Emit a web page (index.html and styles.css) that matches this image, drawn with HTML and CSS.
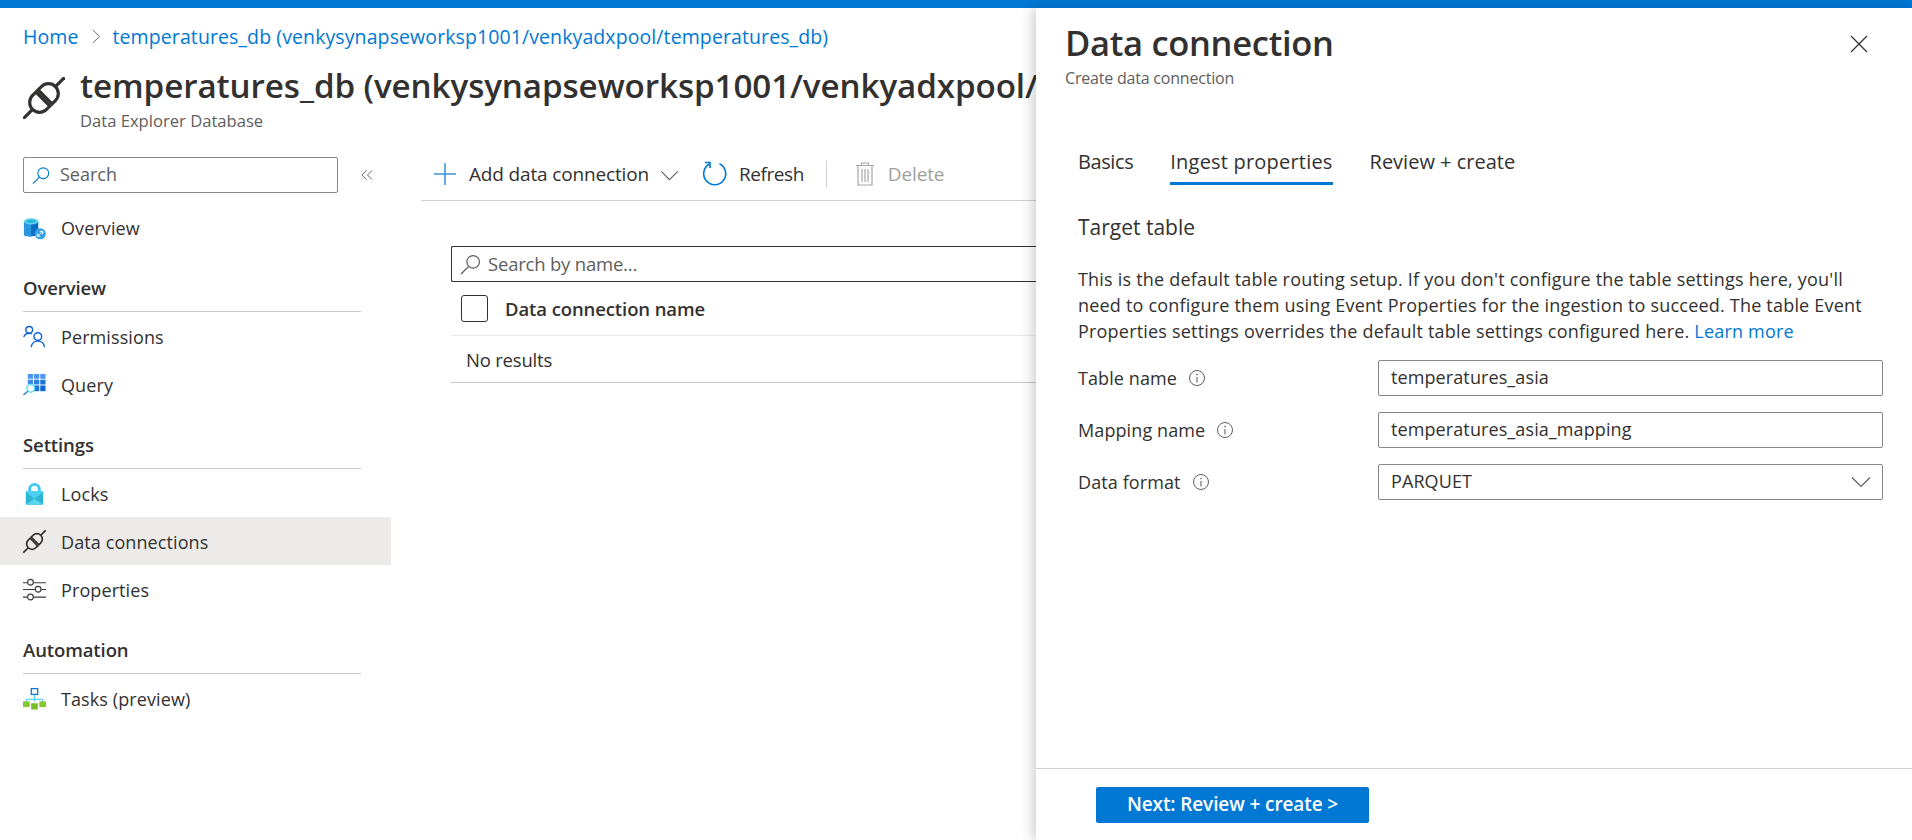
FILE: index.html
```html
<!DOCTYPE html>
<html lang="en">
<head>
<meta charset="utf-8">
<title>Data connection</title>
<link rel="stylesheet" href="styles.css">
</head>
<body>
<svg class="defs" width="0" height="0" aria-hidden="true">
  <defs>
    <symbol id="plug" viewBox="2 2 20 20">
      <g transform="rotate(-45 12 12)" fill="none" stroke="currentColor" stroke-width="1.500">
        <path d="M-2 12H4.300"/>
        <path d="M11.300 7.300H9a4.700 4.700 0 0 0 0 9.400H11.300Z"/>
        <path d="M12.700 7.300H15a4.700 4.700 0 0 1 0 9.400H12.700Z"/>
        <path d="M19.700 12H26"/>
      </g>
    </symbol>
    <symbol id="lens" viewBox="0 0 20 20">
      <circle cx="12.500" cy="7.500" r="6" fill="none" stroke="currentColor" stroke-width="1.200"/>
      <path d="M8.200 11.800L1 19" fill="none" stroke="currentColor" stroke-width="1.300"/>
    </symbol>
    <symbol id="chev" viewBox="0 0 20 12">
      <path d="M1 1.500L10 10.500L19 1.500" fill="none" stroke="currentColor" stroke-width="1.200"/>
    </symbol>
    <symbol id="info" viewBox="0 0 18 18">
      <circle cx="9" cy="9" r="7.500" fill="none" stroke="currentColor" stroke-width="1"/>
      <path d="M9 8v5.500" stroke="currentColor" stroke-width="1.100"/>
      <circle cx="9" cy="5.600" r=".8" fill="currentColor"/>
    </symbol>
  </defs>
</svg>

<div class="topbar"></div>

<div class="page">
  <nav class="crumbs">
    <a class="link">Home</a>
    <svg class="crumb-sep" viewBox="0 0 10 16"><path d="M1 1l7.500 7L1 15" fill="none" stroke="#605e5c" stroke-width="1"/></svg>
    <a class="link">temperatures_db (venkysynapseworksp1001/venkyadxpool/temperatures_db)</a>
  </nav>

  <header class="head">
    <svg class="head-icon"><use href="#plug"/></svg>
    <div class="head-text">
      <h1 class="title">temperatures_db (venkysynapseworksp1001/venkyadxpool/temperatures_db) | Data connections</h1>
      <div class="subtitle">Data Explorer Database</div>
    </div>
  </header>

  <div class="body">
    <aside class="side">
      <div class="side-search-row">
        <div class="side-search">
          <svg class="lens-blue"><use href="#lens"/></svg>
          <span class="nudge">Search</span>
        </div>
        <svg class="collapse" viewBox="0 0 14 12"><path d="M6 1L1 6l5 5M12 1L7 6l5 5" fill="none" stroke="#605e5c" stroke-width="1"/></svg>
      </div>

      <a class="item item-first">
        <svg class="ico" viewBox="0 0 24 24">
          <path d="M1 4.500h15v14c0 2-15 2-15 0z" fill="#0a6fc4"/>
          <path d="M1 4.500h7.500v16c-4 0-7.500-.8-7.500-2z" fill="#2b96de"/>
          <ellipse cx="8.500" cy="4.500" rx="7.500" ry="3.200" fill="#5fd6ee"/>
          <ellipse cx="8.500" cy="4.500" rx="5" ry="1.800" fill="#2fb3df"/>
          <circle cx="18" cy="17.500" r="5.800" fill="#3aa0e6"/>
          <path d="M15.500 20l5-5M17.500 15h3v3M15 17l0 3h3" fill="none" stroke="#fff" stroke-width="1"/>
        </svg>
        <span>Overview</span>
      </a>

      <div class="group">Overview</div>
      <a class="item">
        <svg class="ico" viewBox="0 0 24 24" fill="none" stroke="#0f62d6" stroke-width="1.500">
          <circle cx="6.500" cy="5" r="3.500"/>
          <path d="M.8 12.500c1-2.500 3-3.800 5.700-3.800 1 0 1.800.2 2.500.5"/>
          <circle cx="15.500" cy="12" r="4"/>
          <path d="M8.500 23c.6-3.800 3.300-6.200 7-6.200s6.400 2.400 7 6.200"/>
        </svg>
        <span>Permissions</span>
      </a>
      <a class="item">
        <svg class="ico" viewBox="0 0 24 24">
          <rect x="5" y="1" width="5.500" height="5" fill="#4a96f0"/>
          <rect x="11.500" y="1" width="5.500" height="5" fill="#4a96f0"/>
          <rect x="18" y="1" width="5.500" height="5" fill="#4a96f0"/>
          <rect x="5" y="7" width="5.500" height="5" fill="#3d8ae8"/>
          <rect x="11.500" y="7" width="5.500" height="5" fill="#2f7fdf"/>
          <rect x="18" y="7" width="5.500" height="5" fill="#1a74d6"/>
          <rect x="11.500" y="13" width="5.500" height="6" fill="#1a74d6"/>
          <rect x="18" y="13" width="5.500" height="6" fill="#0f6ad0"/>
          <circle cx="8" cy="16" r="4" fill="#fff" stroke="#5fe3f5" stroke-width="1.600"/>
          <path d="M5 19l-4.500 4" stroke="#1778c8" stroke-width="1.300"/>
        </svg>
        <span>Query</span>
      </a>

      <div class="group">Settings</div>
      <a class="item">
        <svg class="ico" viewBox="0 0 24 24">
          <path d="M5.500 11V7.500a6.500 6.500 0 0 1 13 0V11h-3V7.500a3.500 3.500 0 0 0-7 0V11z" fill="#3cc8f2"/>
          <rect x="3" y="9.500" width="18" height="14" rx="1" fill="#4fd0f2"/>
          <path d="M3 10.500l9 7 9-7V23.500H3z" fill="#2cb6d6"/>
          <path d="M3 23.500l9-6 9 6z" fill="#58d4ec"/>
        </svg>
        <span>Locks</span>
      </a>
      <a class="item active">
        <svg class="ico ico-dark"><use href="#plug"/></svg>
        <span>Data connections</span>
      </a>
      <a class="item">
        <svg class="ico" viewBox="0 0 24 24" fill="none" stroke="#3b3a39" stroke-width="1.200">
          <path d="M0 5h4.500M11 5h13M0 12h12.500M19 12h5M0 20h4.500M11 20h13"/>
          <circle cx="7.800" cy="4.500" r="3"/>
          <circle cx="15.800" cy="11.800" r="3"/>
          <circle cx="7.800" cy="19.800" r="3"/>
        </svg>
        <span>Properties</span>
      </a>

      <div class="group">Automation</div>
      <a class="item">
        <svg class="ico" viewBox="0 0 24 24">
          <path d="M12 8v7M3.500 16v-3h17v3" fill="none" stroke="#5fd0f5" stroke-width="1.300"/>
          <rect x="8.700" y="1.700" width="6.600" height="6" fill="#fff" stroke="#1479d4" stroke-width="1.400"/>
          <rect x="0" y="15" width="7" height="6" fill="#84c92f"/>
          <rect x="8.500" y="17" width="7" height="6.500" fill="#76bd24"/>
          <rect x="17" y="15" width="7" height="6" fill="#84c92f"/>
        </svg>
        <span>Tasks (preview)</span>
      </a>
    </aside>

    <main class="main">
      <div class="toolbar">
        <button class="tool">
          <svg class="tool-plus" viewBox="0 0 22 22"><path d="M11 0v22M0 11h22" stroke="#3a96dd" stroke-width="1.600"/></svg>
          <span>Add data connection</span>
          <svg class="tool-chev"><use href="#chev"/></svg>
        </button>
        <button class="tool tool-refresh">
          <svg class="tool-refresh-ico" viewBox="0 0 26 26" fill="none" stroke="#0078d4" stroke-width="1.600"><path d="M17.500 2.800a11 11 0 1 1-10 .2"/><path d="M2.800 1.500h5.200v5.500" /></svg>
          <span>Refresh</span>
        </button>
        <div class="tool-sep"></div>
        <button class="tool tool-off">
          <svg class="tool-trash" viewBox="0 0 18 24" fill="none" stroke="#a8a6a4" stroke-width="1.200"><path d="M0 3.500h18M5.500 3.500V1h7v2.500M2 3.500V23h14V3.500M6 7v13M9 7v13M12 7v13"/></svg>
          <span>Delete</span>
        </button>
      </div>

      <div class="list">
        <div class="list-search">
          <svg class="lens-dark"><use href="#lens"/></svg>
          <span class="nudge">Search by name...</span>
        </div>
        <div class="list-head">
          <span class="check"></span>
          <span>Data connection name</span>
        </div>
        <div class="list-empty">No results</div>
      </div>
    </main>
  </div>
</div>

<section class="panel">
  <div class="panel-head">
    <div>
      <h2 class="panel-title">Data connection</h2>
      <div class="panel-sub">Create data connection</div>
    </div>
    <svg class="close" viewBox="0 0 18 18"><path d="M1 1l16 16M17 1L1 17" stroke="#323130" stroke-width="1.200"/></svg>
  </div>

  <div class="panel-body">
    <div class="tabs">
      <span class="tab tab-first">Basics</span>
      <span class="tab tab-active">Ingest properties</span>
      <span class="tab">Review + create</span>
    </div>
    <h3 class="section">Target table</h3>
    <p class="desc">This is the default table routing setup. If you don't configure the table settings here, you'll need to configure them using Event Properties for the ingestion to succeed. The table Event Properties settings overrides the default table settings configured here. <a class="link">Learn more</a></p>

    <div class="fields">
      <div class="field">
        <label class="field-label">Table name <svg class="info"><use href="#info"/></svg></label>
        <div class="input">temperatures_asia</div>
      </div>
      <div class="field">
        <label class="field-label">Mapping name <svg class="info"><use href="#info"/></svg></label>
        <div class="input">temperatures_asia_mapping</div>
      </div>
      <div class="field">
        <label class="field-label">Data format <svg class="info"><use href="#info"/></svg></label>
        <div class="input input-select">PARQUET <svg class="select-chev"><use href="#chev"/></svg></div>
      </div>
    </div>
  </div>

  <div class="panel-foot">
    <button class="primary">Next: Review + create &gt;</button>
  </div>
</section>
</body>
</html>
```

FILE: styles.css
```css
* { box-sizing: border-box; }
html, body { margin: 0; height: 100%; }
body {
  height: 840px;
  overflow: hidden;
  position: relative;
  background: #fff;
  color: #323130;
  font-family: "Open Sans", "Noto Sans", sans-serif;
  font-size: 18px;
}
.defs { position: absolute; }
.link { color: #0078d4; }
.topbar { height: 8px; background: #0078d4; }
.nudge { margin-bottom: 2px; }

.page { padding-top: 13px; }
.crumbs {
  display: flex; align-items: center; height: 30px; padding-left: 23px; font-size: 19.500px; letter-spacing: .1px;
}
.crumb-sep { width: 9px; height: 15px; margin: 0 12px 0 13px; }

.head { display: flex; width: 1036px; height: 84px; padding-left: 23px; margin-top: 10px; overflow: hidden; }
.head-icon { width: 42px; height: 42px; margin-top: 16px; color: #323130; flex: none; }
.head-text { margin-left: 15px; padding-top: 3px; white-space: nowrap; }
.title { margin: 0; font-size: 33.200px; line-height: 44px; font-weight: 600; letter-spacing: -.1px; color: #323130; }
.subtitle { font-size: 16.600px; line-height: 24px; color: #605e5c; margin-top: 1px; }

.body { display: flex; padding-top: 12px; }
.side { width: 391px; flex: none; }
.side-search-row { display: flex; align-items: center; padding-left: 23px; height: 36px; }
.side-search {
  width: 315px; height: 36px; display: flex; align-items: center;
  border: 1px solid #8a8886; border-radius: 2px; padding-left: 8px; color: #605e5c; font-size: 18px;
}
.lens-blue { width: 18px; height: 19px; color: #0078d4; margin-right: 10px; }
.collapse { width: 13px; height: 12px; margin-left: 23px; }

.item {
  display: flex; align-items: center; height: 48px; padding: 1px 0 0 23px; color: #323130; font-size: 18px; letter-spacing: .1px;
}
.item-first { margin-top: 11px; padding-top: 0; }
.ico { width: 23px; height: 23px; margin-right: 15px; flex: none; }
.ico-dark { color: #323130; }
.item.active { background: #edebe9; }
.group {
  margin: 0 30px 0 23px; padding-bottom: 11px; height: 61px; line-height: 24px;
  display: flex; align-items: flex-end;
  border-bottom: 1px solid #c8c6c4;
  font-size: 18.500px; font-weight: 600; letter-spacing: -.1px;
}
.item-first + .group { height: 60px; }

.main { flex: 1; min-width: 0; padding-left: 30px; }
.toolbar {
  display: flex; align-items: center; height: 52px; padding-bottom: 2px; border-bottom: 1px solid #d2d0ce; margin-top: -8px;
}
.tool {
  display: flex; align-items: center; border: 0; background: none; padding: 0; font: inherit; font-size: 19px; color: #323130; letter-spacing: -.15px;
}
.tool-plus { width: 22px; height: 22px; margin: 0 13px; }
.tool-chev { width: 19px; height: 11px; margin-left: 11px; color: #605e5c; margin-top: 3px; }
.tool-refresh { margin-left: 23px; letter-spacing: -.45px; }
.tool-refresh-ico { width: 26px; height: 26px; margin-right: 11px; }
.tool-sep { width: 1px; height: 26px; background: #d2d0ce; margin: 0 29px 0 22px; }
.tool-trash { width: 18px; height: 24px; margin-right: 14px; }
.tool-off { color: #a19f9d; }

.list { margin: 45px 0 0 30px; }
.list-search {
  height: 36px; border: 1px solid #323130; border-radius: 2px; display: flex; align-items: center;
  padding-left: 8px; color: #605e5c; font-size: 18.500px; letter-spacing: -.2px; border-right: 0;
}
.lens-dark { width: 21px; height: 21px; color: #605e5c; margin-right: 7px; }
.list-head {
  height: 54px; display: flex; align-items: center; padding-left: 10px; border-bottom: 1px solid #edebe9;
  font-weight: 600; font-size: 18.500px; letter-spacing: -.1px;
}
.check { width: 27px; height: 27px; border: 1px solid #323130; border-radius: 3px; margin-right: 17px; }
.list-empty { height: 47px; display: flex; align-items: center; padding-left: 15px; border-bottom: 1px solid #c8c6c4; font-size: 18.500px; letter-spacing: -.2px; }

.panel {
  position: absolute; top: 8px; left: 1036px; right: 0; bottom: 0;
  background: #fff; box-shadow: -4px 0 12px rgba(0,0,0,.18);
  display: flex; flex-direction: column;
}
.panel-head { display: flex; justify-content: space-between; padding: 11px 44px 0 29px; height: 131px; }
.panel-title { margin: 0; font-size: 34.500px; line-height: 48px; font-weight: 600; letter-spacing: -.3px; }
.panel-sub { font-size: 16px; line-height: 22px; color: #605e5c; letter-spacing: -.2px; }
.close { width: 18px; height: 18px; margin-top: 16px; }

.panel-body { flex: 1; padding: 0 29px 0 42px; }
.tabs { display: flex; gap: 37px; height: 46px; }
.tab { font-size: 20px; line-height: 30px; color: #323130; padding-top: 8px; box-sizing: content-box; }
.tab-first { letter-spacing: -.4px; }
.tab-active { border-bottom: 3px solid #0078d4; height: 35px; letter-spacing: .2px; font-weight: 500; }
.section { margin: 28px 0 0; font-size: 21px; line-height: 28px; font-weight: 400; }
.desc { margin: 25px 0 0; max-width: 800px; font-size: 18px; line-height: 26px; letter-spacing: .2px; color: #323130; }

.fields { margin-top: 16px; display: flex; flex-direction: column; gap: 16px; }
.field { display: flex; align-items: center; }
.field-label { width: 300px; flex: none; display: flex; align-items: center; gap: 11px; font-size: 18px; letter-spacing: .1px; }
.info { width: 18px; height: 18px; color: #605e5c; }
.input {
  flex: 1; height: 36px; display: flex; align-items: center; justify-content: space-between;
  border: 1px solid #8a8886; border-radius: 2px; padding: 0 11px 2px 12px; font-size: 18px; letter-spacing: .1px;
}
.select-chev { width: 20px; height: 12px; color: #605e5c; margin-top: 2px; }

.panel-foot { height: 72px; border-top: 1px solid #d2d0ce; padding: 18px 0 0 60px; flex: none; }
.primary {
  width: 273px; height: 36px; padding: 0 0 2px; background: #0078d4; color: #fff; border: 0; border-radius: 2px;
  font: inherit; font-size: 19px; font-weight: 600; letter-spacing: -.1px;
}
```
